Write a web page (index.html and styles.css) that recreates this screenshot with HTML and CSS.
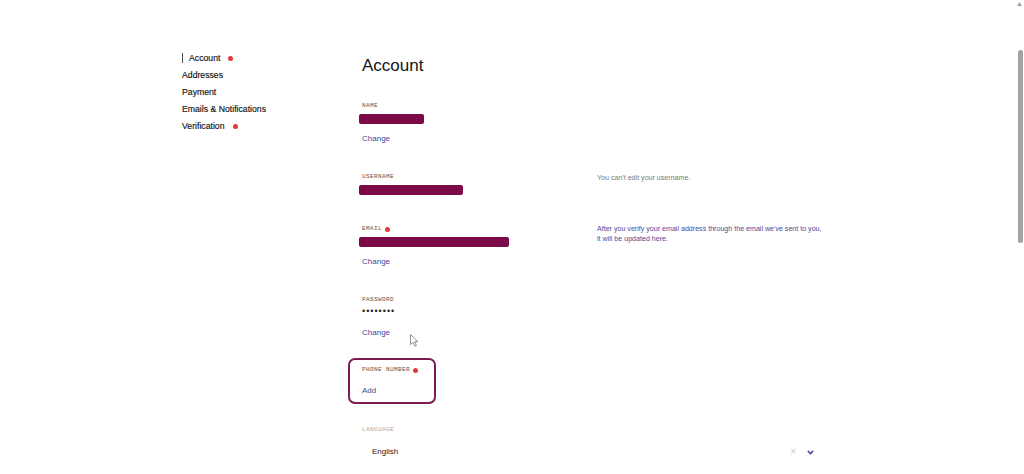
FILE: index.html
```html
<!DOCTYPE html>
<html lang="en">
<head>
<meta charset="utf-8">
<title>Account</title>
<link rel="stylesheet" href="styles.css">
</head>
<body>
<div class="page">
  <nav class="sidebar">
    <a class="nav-item active">Account <span class="dot"></span></a>
    <a class="nav-item">Addresses</a>
    <a class="nav-item">Payment</a>
    <a class="nav-item">Emails &amp; Notifications</a>
    <a class="nav-item">Verification <span class="dot"></span></a>
  </nav>
  <main class="main">
    <h1 class="title">Account</h1>

    <section class="field">
      <div class="field-body">
        <div class="label">NAME</div>
        <div class="redacted" style="width:65px"></div>
        <a class="link">Change</a>
      </div>
    </section>

    <section class="field field-nolink">
      <div class="field-body">
        <div class="label">USERNAME</div>
        <div class="redacted" style="width:104px"></div>
      </div>
      <p class="hint">You can't edit your username.</p>
    </section>

    <section class="field">
      <div class="field-body">
        <div class="label">EMAIL <span class="dot"></span></div>
        <div class="redacted" style="width:150px"></div>
        <a class="link">Change</a>
      </div>
      <p class="hint hint-blue">After you verify your email address through the email we've sent to you, it will be updated here.</p>
    </section>

    <section class="field field-password">
      <div class="field-body">
        <div class="label">PASSWORD</div>
        <div class="password">••••••••</div>
        <a class="link">Change</a>
      </div>
    </section>

    <section class="field field-phone">
      <div class="phone-box">
        <div class="label">PHONE NUMBER <span class="dot"></span></div>
        <a class="link">Add</a>
      </div>
    </section>

    <section class="language">
      <div class="label label-muted">LANGUAGE</div>
      <div class="select">
        <span class="select-value">English</span>
        <span class="select-actions">
          <span class="clear">×</span>
          <svg class="chevron" width="7" height="5" viewBox="0 0 7 5"><path d="M0.8 0.9 L3.5 3.6 L6.2 0.9" fill="none" stroke="#4a4a9e" stroke-width="1.5"/></svg>
        </span>
      </div>
    </section>
  </main>
</div>

<div class="scrollbar">
  <svg class="scroll-arrow" width="5" height="4" viewBox="0 0 5 4"><path d="M2.5 0 L5 4 L0 4 Z" fill="#a3a3a3"/></svg>
  <div class="scroll-thumb"></div>
</div>

<svg class="cursor" width="9" height="13" viewBox="0 0 9 13"><path d="M0.5 0.5 L0.5 10.5 L3 8.3 L4.8 12.2 L6.4 11.5 L4.7 7.7 L8 7.7 Z" fill="#fff" stroke="#777" stroke-width="0.8"/></svg>
</body>
</html>
```

FILE: styles.css
```css
html, body {
  margin: 0;
  padding: 0;
  overflow: hidden;
  background: #ffffff;
}

body {
  width: 1024px;
  height: 474px;
  font-family: "Liberation Sans", Arial, sans-serif;
  color: #1c1c1c;
}

.page {
  display: flex;
  padding-left: 182px;
}

.sidebar {
  width: 180px;
  padding-top: 50px;
  display: flex;
  flex-direction: column;
}

.nav-item {
  display: flex;
  align-items: center;
  font-size: 8.7px;
  line-height: 17px;
  color: #111;
  -webkit-text-stroke: 0.15px #111;
}

.nav-item.active {
  border-left: 1px solid #555;
  padding-left: 6px;
  line-height: 10px;
  margin-top: 3px;
  margin-bottom: 3.5px;
}

.nav-item .dot {
  margin-left: 8px;
}

.dot {
  display: inline-block;
  width: 5px;
  height: 5px;
  border-radius: 50%;
  background: #e0393e;
}

.main {
  width: 468px;
  padding-top: 56px;
  display: flex;
  flex-direction: column;
}

.title {
  margin: 0 0 26px 0;
  font-size: 17px;
  line-height: 20px;
  font-weight: 400;
  color: #151515;
}

.field {
  display: grid;
  grid-template-columns: 235px 228px;
  margin-bottom: 28px;
}

.field-nolink {
  margin-bottom: 30px;
}

.field-body {
  display: flex;
  flex-direction: column;
  align-items: flex-start;
}

.label {
  display: flex;
  align-items: center;
  gap: 3px;
  font-family: "Liberation Mono", "DejaVu Sans Mono", monospace;
  font-size: 6px;
  line-height: 8px;
  letter-spacing: 0.4px;
  color: #555;
  white-space: nowrap;
}

.label-muted {
  color: #a8a8a8;
}

.redacted {
  height: 10px;
  margin-top: 4px;
  margin-left: -3px;
  border-radius: 2px;
  background: #7c0a47;
}

.link {
  margin-top: 9px;
  font-size: 8px;
  line-height: 12px;
  color: #45469a;
}

.hint {
  margin: 0;
  font-size: 7.1px;
  line-height: 10px;
  color: #7a7a7a;
}

.hint-blue {
  color: #4a4a9e;
  margin-top: -1px;
}

.password {
  margin-top: 3px;
  font-size: 9px;
  line-height: 8px;
  letter-spacing: 1px;
  color: #222;
}

.field-password .link {
  margin-top: 12px;
}

.field-password {
  margin-bottom: 18px;
}

.field-phone {
  display: block;
  margin-bottom: 22px;
}

.phone-box {
  display: inline-flex;
  flex-direction: column;
  align-items: flex-start;
  margin-left: -14px;
  padding: 6px 16px 5px 12px;
  border: 2px solid #7b1d51;
  border-radius: 7px;
}

.phone-box .link {
  margin-top: 11px;
}

.language {
  display: flex;
  flex-direction: column;
}

.select {
  display: flex;
  align-items: center;
  justify-content: space-between;
  width: 458px;
  margin-top: 12px;
  padding-left: 10px;
  box-sizing: border-box;
  padding-right: 6px;
  height: 12px;
}

.select-value {
  font-size: 8px;
  line-height: 12px;
  color: #1a1a1a;
}

.select-actions {
  display: flex;
  align-items: center;
  gap: 11px;
}

.clear {
  font-size: 10px;
  line-height: 12px;
  color: #c8c8c8;
}

.chevron {
  display: block;
}

.scrollbar {
  position: fixed;
  top: 0;
  right: 0;
  width: 9px;
  height: 474px;
  background: #ffffff;
}

.scroll-arrow {
  position: absolute;
  top: 2px;
  left: 2px;
}

.scroll-thumb {
  position: absolute;
  top: 50px;
  left: 3px;
  width: 5px;
  height: 193px;
  border-radius: 3px;
  background: #a3a3a3;
}

.cursor {
  position: absolute;
  left: 410px;
  top: 334px;
}
```
